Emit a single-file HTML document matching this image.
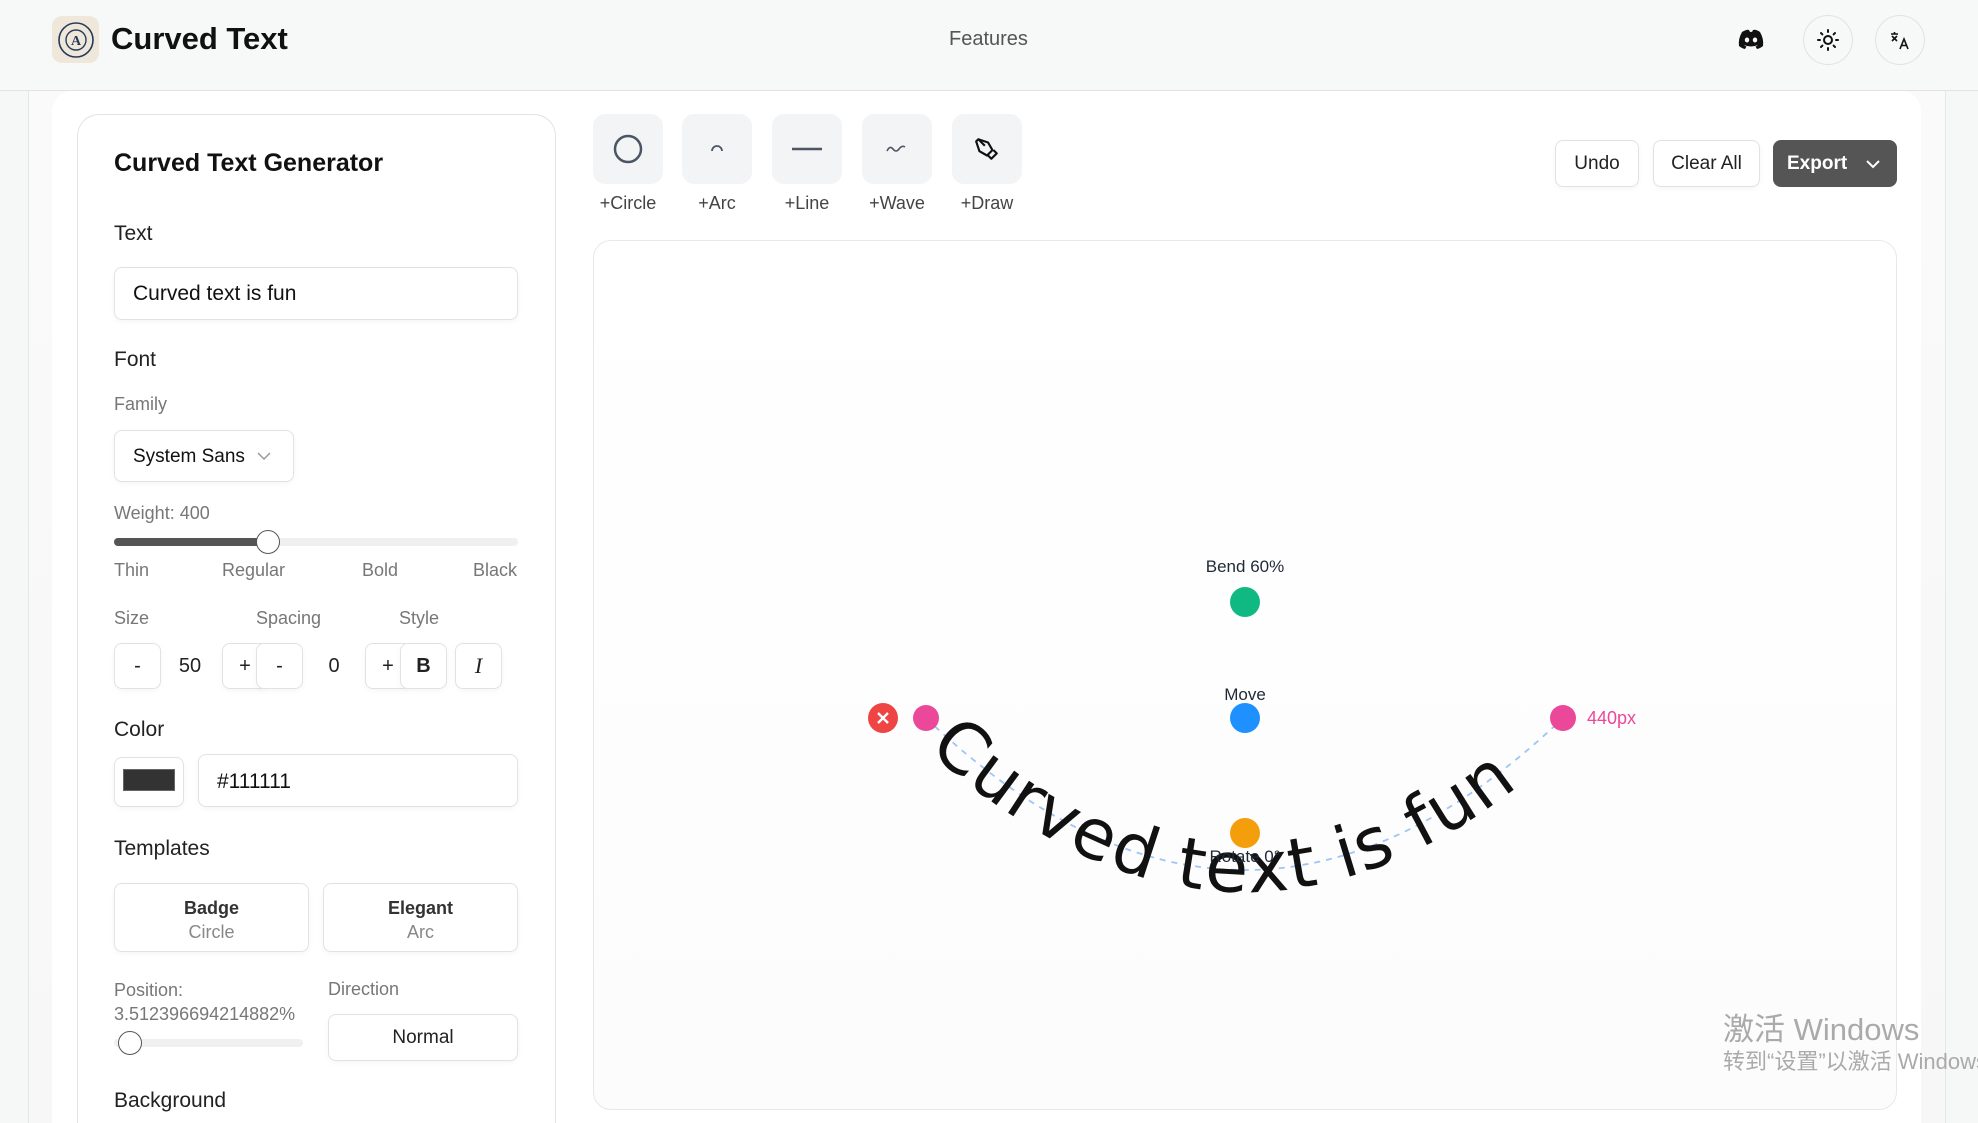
<!DOCTYPE html>
<html style="width:1978px;height:1123px;overflow:hidden"><head><meta charset="utf-8"><style>
*{box-sizing:border-box;margin:0;padding:0}
body{width:1978px;height:1123px;overflow:hidden;background:#f6f7f7;font-family:"Liberation Sans","DejaVu Sans","Noto Sans CJK SC",sans-serif;color:#111;position:relative}
.a{position:absolute}
.hdr{left:0;top:0;width:1978px;height:91px;background:#f7f8f8;border-bottom:1px solid #e3e3e3}
.card{background:#fff}
.lbl{font-size:21px;color:#222}
.sub{font-size:18px;color:#777}
.box{border:1px solid #e2e2e2;border-radius:8px;background:#fff;box-shadow:0 2px 6px rgba(0,0,0,.04)}
.btn{display:flex;align-items:center;justify-content:center;font-size:20px;color:#222}
.tool{width:70px;height:70px;border-radius:12px;background:#f3f4f6;display:flex;align-items:center;justify-content:center}
.tl{font-size:18px;color:#444;width:90px;text-align:center}
.ic{width:50px;height:50px;border-radius:50%;border:1px solid #e2e2e2;display:flex;align-items:center;justify-content:center}
</style></head><body>
<div class="a hdr"></div>
<div class="a" style="left:52px;top:16px;width:47px;height:47px;border-radius:10px;background:#efe8da;display:flex;align-items:center;justify-content:center">
<svg width="38" height="38" viewBox="0 0 38 38"><circle cx="19" cy="19" r="17" fill="none" stroke="#253b5a" stroke-width="1.6"/><circle cx="19" cy="19" r="10" fill="none" stroke="#253b5a" stroke-width="1.4"/><text x="19" y="24" font-size="14" font-weight="bold" text-anchor="middle" fill="#253b5a" font-family="Liberation Serif,serif">A</text></svg></div>
<div class="a" style="left:111px;top:21px;font-size:31px;font-weight:600;color:#111">Curved Text</div>
<div class="a" style="left:949px;top:28px;font-size:20px;color:#555">Features</div>
<svg class="a" style="left:1738px;top:29px" width="26" height="20" viewBox="0 0 26 20"><path d="M4 3 Q9 0 11 1 L12 3 Q13 2.5 14 3 L15 1 Q18 0 22 3 Q26 10 25 17 Q22 19.5 19 20 L17.5 17.5 Q19 17 20 16 Q13 19 6 16 Q7 17 8.5 17.5 L7 20 Q4 19.5 1 17 Q0 10 4 3Z" fill="#111"/><ellipse cx="9" cy="11" rx="2.2" ry="2.5" fill="#f7f8f8"/><ellipse cx="17" cy="11" rx="2.2" ry="2.5" fill="#f7f8f8"/></svg>
<div class="a ic" style="left:1803px;top:15px"><svg width="24" height="24" viewBox="0 0 24 24" fill="none" stroke="#111" stroke-width="2" stroke-linecap="round"><circle cx="12" cy="12" r="4"/><path d="M12 2v2M12 20v2M2 12h2M20 12h2M5 5l1.4 1.4M17.6 17.6L19 19M5 19l1.4-1.4M17.6 6.4L19 5"/></svg></div>
<div class="a ic" style="left:1875px;top:15px"><svg width="24" height="24" viewBox="0 0 24 24" fill="none" stroke="#111" stroke-width="1.6"><path d="M3 6h7M6.5 4v2M4 8l5 5M9 8l-5 5"/><path d="M12 21l4-10 4 10M13.5 17.5h5"/></svg></div>
<div class="a" style="left:28px;top:91px;width:1918px;height:1032px;border-left:1px solid #e6e6e6;border-right:1px solid #e6e6e6;background:linear-gradient(#fafafa,#f7f7f7)"></div>
<div class="a card" style="left:52px;top:91px;width:1869px;height:1032px;border-radius:20px 20px 0 0"></div>
<div class="a card" style="left:77px;top:114px;width:479px;height:1009px;border:1px solid #e3e3e3;border-bottom:none;border-radius:22px 22px 0 0"></div>
<div class="a" style="left:114px;top:149px;font-size:25px;font-weight:600">Curved Text Generator</div>
<div class="a lbl" style="left:114px;top:222px">Text</div>
<div class="a box" style="left:114px;top:267px;width:404px;height:53px;font-size:21px;padding:14px 18px">Curved text is fun</div>
<div class="a lbl" style="left:114px;top:348px">Font</div>
<div class="a sub" style="left:114px;top:394px">Family</div>
<div class="a box" style="left:114px;top:430px;width:180px;height:52px;font-size:19px;padding:15px 18px">System Sans<svg style="position:absolute;left:142px;top:21px" width="14" height="9" viewBox="0 0 14 9"><path d="M1 1l6 6 6-6" fill="none" stroke="#999" stroke-width="1.5"/></svg></div>
<div class="a sub" style="left:114px;top:503px">Weight: 400</div>
<div class="a" style="left:114px;top:538px;width:404px;height:8px;border-radius:4px;background:#f0f0f0"></div>
<div class="a" style="left:114px;top:538px;width:154px;height:8px;border-radius:4px;background:#555"></div>
<div class="a" style="left:256px;top:530px;width:24px;height:24px;border-radius:50%;background:#fff;border:1.5px solid #555"></div>
<div class="a sub" style="left:114px;top:560px">Thin</div>
<div class="a sub" style="left:222px;top:560px">Regular</div>
<div class="a sub" style="left:362px;top:560px">Bold</div>
<div class="a sub" style="left:473px;top:560px">Black</div>
<div class="a sub" style="left:114px;top:608px">Size</div>
<div class="a sub" style="left:256px;top:608px">Spacing</div>
<div class="a sub" style="left:399px;top:608px">Style</div>
<div class="a box btn" style="left:114px;top:643px;width:47px;height:46px">-</div>
<div class="a btn" style="left:170px;top:643px;width:40px;height:46px">50</div>
<div class="a box btn" style="left:222px;top:643px;width:46px;height:46px">+</div>
<div class="a box btn" style="left:256px;top:643px;width:47px;height:46px">-</div>
<div class="a btn" style="left:314px;top:643px;width:40px;height:46px">0</div>
<div class="a box btn" style="left:365px;top:643px;width:46px;height:46px">+</div>
<div class="a box btn" style="left:400px;top:643px;width:47px;height:46px;font-weight:bold">B</div>
<div class="a box btn" style="left:455px;top:643px;width:47px;height:46px;font-style:italic;font-family:'Liberation Serif',serif;font-size:22px">I</div>
<div class="a lbl" style="left:114px;top:718px">Color</div>
<div class="a box" style="left:114px;top:757px;width:70px;height:50px"><div style="margin:11px 8px;width:52px;height:22px;background:#333;border:1px solid #666"></div></div>
<div class="a box" style="left:198px;top:754px;width:320px;height:53px;font-size:21px;padding:15px 18px">#111111</div>
<div class="a lbl" style="left:114px;top:837px">Templates</div>
<div class="a box" style="left:114px;top:883px;width:195px;height:69px;text-align:center;padding-top:12px;font-size:18px;line-height:24px"><b style="color:#333">Badge</b><br><span style="color:#888">Circle</span></div>
<div class="a box" style="left:323px;top:883px;width:195px;height:69px;text-align:center;padding-top:12px;font-size:18px;line-height:24px"><b style="color:#333">Elegant</b><br><span style="color:#888">Arc</span></div>
<div class="a sub" style="left:114px;top:978px;line-height:24px">Position:<br>3.512396694214882%</div>
<div class="a" style="left:114px;top:1039px;width:189px;height:8px;border-radius:4px;background:#f0f0f0"></div>
<div class="a" style="left:118px;top:1031px;width:24px;height:24px;border-radius:50%;background:#fff;border:1.5px solid #555"></div>
<div class="a sub" style="left:328px;top:979px">Direction</div>
<div class="a box btn" style="left:328px;top:1014px;width:190px;height:47px;font-size:19px">Normal</div>
<div class="a lbl" style="left:114px;top:1089px">Background</div>

<div class="a tool" style="left:593px;top:114px"><svg width="32" height="32"><circle cx="16" cy="16" r="13" fill="none" stroke="#4b5563" stroke-width="2.5"/></svg></div>
<div class="a tool" style="left:682px;top:114px"><svg width="20" height="20"><path d="M5 12a5 5 0 0 1 10 0" fill="none" stroke="#4b5563" stroke-width="1.8"/></svg></div>
<div class="a tool" style="left:772px;top:114px"><svg width="32" height="10"><path d="M1 5h30" stroke="#4b5563" stroke-width="2.5"/></svg></div>
<div class="a tool" style="left:862px;top:114px"><svg width="24" height="10"><path d="M2 7q3-6 6-2t6 0 6-2" fill="none" stroke="#4b5563" stroke-width="1.6"/></svg></div>
<div class="a tool" style="left:952px;top:114px"><svg width="26" height="26" viewBox="0 0 24 24" fill="none" stroke="#111" stroke-width="2" stroke-linejoin="round"><path d="M4 3l9 3 4 7-5 5-7-4-3-9z"/><path d="M4 3l6 6"/><path d="M13 18l3 3 5-5-3-3"/></svg></div>
<div class="a tl" style="left:583px;top:193px">+Circle</div>
<div class="a tl" style="left:672px;top:193px">+Arc</div>
<div class="a tl" style="left:762px;top:193px">+Line</div>
<div class="a tl" style="left:852px;top:193px">+Wave</div>
<div class="a tl" style="left:942px;top:193px">+Draw</div>
<div class="a box btn" style="left:1555px;top:140px;width:84px;height:47px;font-size:19px">Undo</div>
<div class="a box btn" style="left:1653px;top:140px;width:107px;height:47px;font-size:19px">Clear All</div>
<div class="a btn" style="left:1773px;top:140px;width:124px;height:47px;border-radius:8px;background:#555;color:#fff;font-size:19px;font-weight:600;justify-content:flex-start;padding-left:14px">Export<svg style="margin-left:18px" width="16" height="10"><path d="M2 2l6 6 6-6" fill="none" stroke="#fff" stroke-width="2"/></svg></div>
<div class="a" style="left:593px;top:240px;width:1304px;height:870px;border:1px solid #e8e8e8;border-radius:18px;background:linear-gradient(#fff,#fcfcfc)"></div>
<svg class="a" style="left:0;top:0" width="1978" height="1123">
<path id="cp" d="M926 718 Q1245 1022 1563 718" fill="none" stroke="#9ec5f5" stroke-width="1.8" stroke-dasharray="6 6"/>
<text font-family="DejaVu Sans,sans-serif" font-size="70" fill="#111" dy="22"><textPath href="#cp" startOffset="3%">Curved text is fun</textPath></text>
<circle cx="883" cy="718" r="15" fill="#ef4444"/><path d="M878 713l10 10M888 713l-10 10" stroke="#fff" stroke-width="2.4"/>
<circle cx="926" cy="718" r="13" fill="#ec4899"/>
<circle cx="1563" cy="718" r="13" fill="#ec4899"/>
<text x="1587" y="724" font-size="18" fill="#ec4899" font-family="Liberation Sans,sans-serif">440px</text>
<text x="1245" y="572" font-size="17" fill="#1f2937" text-anchor="middle" font-family="Liberation Sans,sans-serif">Bend 60%</text>
<circle cx="1245" cy="602" r="15" fill="#10b981"/>
<text x="1245" y="700" font-size="17" fill="#1f2937" text-anchor="middle" font-family="Liberation Sans,sans-serif">Move</text>
<circle cx="1245" cy="718" r="15" fill="#1e90ff"/>
<circle cx="1245" cy="833" r="15" fill="#f59e0b"/>
<text x="1245" y="862" font-size="17" fill="#1f2937" text-anchor="middle" font-family="Liberation Sans,sans-serif">Rotate 0°</text>
</svg>
<div class="a" style="left:1723px;top:1004px;font-size:31px;color:#aaa;white-space:nowrap;font-family:'Liberation Sans','Noto Sans CJK SC',sans-serif">激活 Windows</div>
<div class="a" style="left:1723px;top:1044px;font-size:22px;color:#aaa;white-space:nowrap;font-family:'Liberation Sans','Noto Sans CJK SC',sans-serif">转到“设置”以激活 Windows。</div>
</body></html>
